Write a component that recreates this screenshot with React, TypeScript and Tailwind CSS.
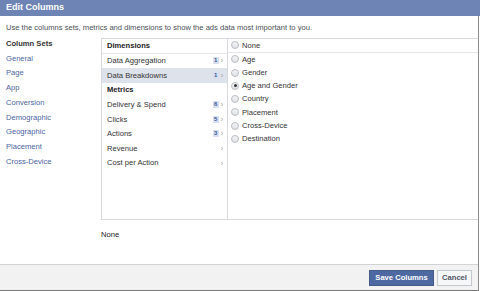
import React from "react";

const columnSets = ["General", "Page", "App", "Conversion", "Demographic", "Geographic", "Placement", "Cross-Device"];

type Row = { label: string; header?: boolean; count?: number; arrow?: boolean; selected?: boolean };

const leftRows: Row[] = [
  { label: "Dimensions", header: true },
  { label: "Data Aggregation", count: 1, arrow: true },
  { label: "Data Breakdowns", count: 1, arrow: true, selected: true },
  { label: "Metrics", header: true },
  { label: "Delivery & Spend", count: 6, arrow: true },
  { label: "Clicks", count: 5, arrow: true },
  { label: "Actions", count: 3, arrow: true },
  { label: "Revenue", arrow: true },
  { label: "Cost per Action", arrow: true },
];

const options = ["Age", "Gender", "Age and Gender", "Country", "Placement", "Cross-Device", "Destination"];

function Radio({ checked }: { checked?: boolean }) {
  return (
    <span className="w-[8px] h-[8px] rounded-full border border-[#b9bcc2] bg-gradient-to-b from-[#f4f5f7] to-[#dfe1e5] flex items-center justify-center shrink-0">
      {checked && <span className="w-[3px] h-[3px] rounded-full bg-[#333]" />}
    </span>
  );
}

export default function App() {
  return (
    <div
      className="w-[480px] h-[291px] bg-white flex flex-col overflow-hidden text-[7.6px] text-[#333]"
      style={{ fontFamily: '"Liberation Sans", Arial, sans-serif' }}
    >
      {/* Header */}
      <div className="h-[16px] bg-[#6d84b4] flex items-center px-[6px] shrink-0">
        <span className="text-white font-bold text-[9px]">Edit Columns</span>
      </div>

      <div className="flex-1 flex flex-col border-r border-[#8b8b8b] mr-[1px]">
        <p className="px-[6px] pt-[6px] h-[23px] text-[#4b4f56]">
          Use the columns sets, metrics and dimensions to show the ads data most important to you.
        </p>

        <div className="flex">
          {/* Column sets */}
          <div className="w-[101px] pl-[6px] -mt-[2px]">
            <div className="font-bold leading-[14.7px] text-[#333]">Column Sets</div>
            {columnSets.map((s) => (
              <div key={s} className="leading-[14.7px] text-[#4a64a0]">
                {s}
              </div>
            ))}
          </div>

          {/* Picker panel */}
          <div className="flex-1 mt-[-1px] border-t border-b border-l border-[#d6d9de] h-[182px] flex">
            <div className="w-[126px] border-r border-[#d6d9de]">
              {leftRows.map((r, i) => (
                <div
                  key={r.label}
                  className={`h-[14.6px] flex items-center pl-[5px] pr-[4px] ${
                    r.header ? "font-bold text-[#222]" : ""
                  } ${r.selected ? "bg-[#dde2eb]" : ""} ${i === 0 ? "border-b border-[#e3e5e9]" : ""}`}
                >
                  <span className="flex-1">{r.label}</span>
                  {r.count !== undefined && (
                    <span className="w-[6px] h-[7px] bg-[#d8e0ef] text-[#3b5998] font-bold text-[6px] leading-[7px] text-center mr-[2px]">
                      {r.count}
                    </span>
                  )}
                  {r.arrow && <span className="text-[#999] text-[7px] leading-none">›</span>}
                </div>
              ))}
            </div>

            <div className="flex-1">
              <div className="h-[13.6px] flex items-center gap-[3px] pl-[3px] border-b border-[#e3e5e9]">
                <Radio />
                <span>None</span>
              </div>
              {options.map((o) => (
                <div key={o} className="h-[13.3px] flex items-center gap-[3px] pl-[3px]">
                  <Radio checked={o === "Age and Gender"} />
                  <span>{o}</span>
                </div>
              ))}
            </div>
          </div>
        </div>

        <div className="pl-[101px] pt-[9px] h-[24px] text-[#222]">None</div>

        {/* Footer */}
        <div className="mt-auto h-[27px] bg-[#f2f2f2] border-t border-[#d3d3d3] border-b border-b-[#777] flex items-center justify-end gap-[3px] pr-[6px]">
          <button className="h-[16px] w-[65px] bg-[#4e69a2] border border-[#435a8b] text-white font-bold text-[7.6px]">
            Save Columns
          </button>
          <button className="h-[16px] w-[35px] bg-[#f6f7f9] border border-[#c4c7cc] text-[#4e5665] font-bold text-[7.6px]">
            Cancel
          </button>
        </div>
      </div>
    </div>
  );
}
